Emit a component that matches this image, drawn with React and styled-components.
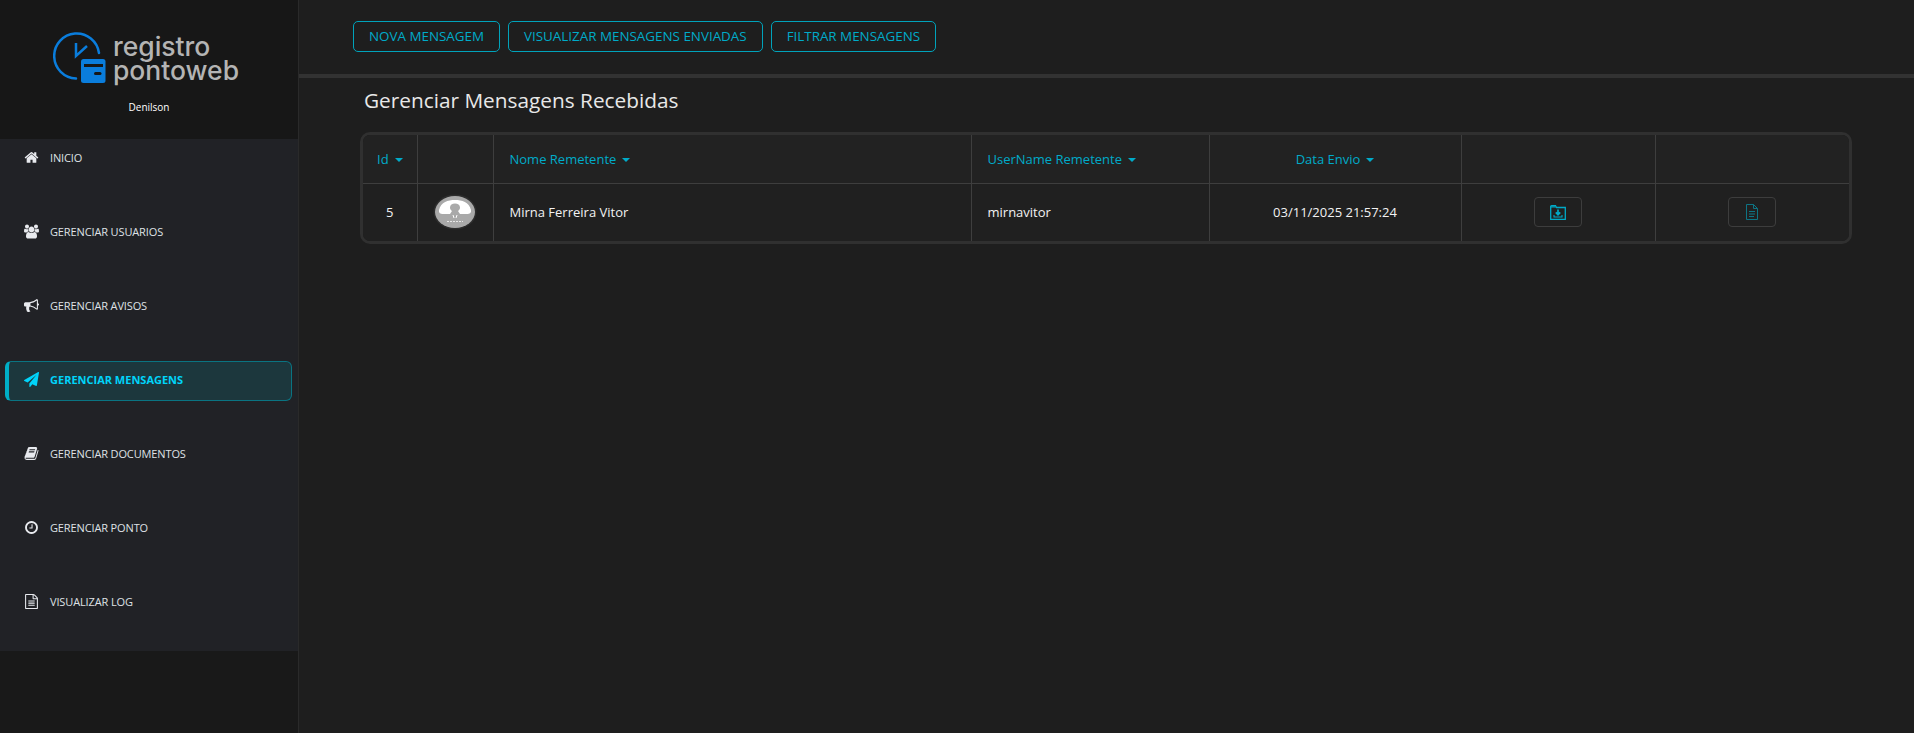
import React from "react";
import styled, { createGlobalStyle } from "styled-components";

const Global = createGlobalStyle`
  html, body { margin: 0; padding: 0; height: 100%; background: #1e1e1e; }
  * { box-sizing: border-box; }
  body { font-family: "Open Sans", "Noto Sans", sans-serif; overflow: hidden; }
`;

const Page = styled.div`
  display: flex;
  width: 1914px;
  height: 733px;
  overflow: hidden;
`;
const Sidebar = styled.aside`
  width: 299px;
  flex: none;
  background: #191919;
  border-right: 1px solid #2a2a2a;
`;
const Brand = styled.div`
  height: 139px;
  background: #171717;
  display: flex;
  flex-direction: column;
  align-items: center;
  padding-top: 32px;
`;
const Logo = styled.div`
  display: flex;
  align-items: center;
  gap: 7px;
  margin-left: -6px;
`;
const LogoText = styled.div`
  padding-top: 2px;
  font-family: "Inter", "Lato", sans-serif;
  font-size: 26.5px;
  line-height: 23.5px;
  font-weight: 500;
  color: #b4b4b4;
`;
const UserName = styled.div`
  margin-top: 17px;
  font-size: 10px;
  line-height: 14px;
  font-weight: 400;
  color: #fff;
`;
const Nav = styled.nav`
  background: #212226;
  height: 512px;
  display: flex;
  flex-direction: column;
  gap: 34px;
`;
const NavItem = styled.a`
  display: flex;
  align-items: center;
  height: 40px;
  margin: 0 6px 0 5px;
  padding: 0 0 3px ${p => (p.$active ? "15px" : "18px")};
  border-radius: 6px;
  font-size: 11px;
  letter-spacing: ${p => (p.$active ? "0" : "-0.13px")};
  font-weight: ${p => (p.$active ? 700 : 400)};
  color: ${p => (p.$active ? "#00d4fa" : "#dfe1e5")};
  background: ${p => (p.$active ? "#1c373d" : "transparent")};
  border: 1px solid ${p => (p.$active ? "#0a7482" : "transparent")};
  border-left: ${p => (p.$active ? "4px solid #00aec6" : "1px solid transparent")};
`;
const NavSvg = styled.svg`
  width: 15px;
  height: 15px;
  margin-right: 11px;
  flex: none;
  overflow: visible;
  fill: ${p => (p.$active ? "#00d4fa" : "#e8eaee")};
`;
const Main = styled.main`
  flex: 1;
  min-width: 0;
  background: #1e1e1e;
`;
const TopBar = styled.div`
  height: 78px;
  padding: 21px 0 0 54px;
  display: flex;
  gap: 8px;
  align-items: flex-start;
  border-bottom: 4px solid #323232;
`;
const TopButton = styled.button`
  height: 31px;
  padding: 0 15px;
  border: 1px solid #00a3bb;
  border-radius: 5px;
  background: transparent;
  color: #00abc9;
  font-family: inherit;
  font-size: 13.4px;
  line-height: 1;
  white-space: nowrap;
`;
const Title = styled.h1`
  margin: 7px 0 0 65px;
  font-size: 20.8px;
  line-height: 30px;
  font-weight: 400;
  color: #e8e8e8;
`;
const TableBox = styled.div`
  margin: 17px 0 0 61px;
  width: 1492px;
  border: 3px solid #303030;
  border-radius: 10px;
  overflow: hidden;
`;
const Table = styled.table`
  width: 100%;
  table-layout: fixed;
  border-collapse: collapse;
  background: #202020;
  font-size: 13px;
`;
const Th = styled.th`
  height: 48px;
  padding: 0 0 0 ${p => (p.$center ? "0" : "16px")};
  border: 1px solid #3e3e3e;
  border-top: 0;
  font-weight: 400;
  color: #00abc9;
  background: #222;
  text-align: ${p => (p.$center ? "center" : "left")};
  &:first-child { border-left: 0; padding-left: 14px; }
  &:last-child { border-right: 0; }
`;
const Td = styled.td`
  height: 58px;
  padding: 0 0 0 ${p => (p.$center ? "0" : "16px")};
  border: 1px solid #3e3e3e;
  border-bottom: 0;
  color: #f2f2f2;
  text-align: ${p => (p.$center ? "center" : "left")};
  &:first-child { border-left: 0; }
  &:last-child { border-right: 0; }
`;
const Caret = styled.span`
  display: inline-block;
  margin-left: 6px;
  vertical-align: 2px;
  border-left: 4px solid transparent;
  border-right: 4px solid transparent;
  border-top: 4px solid #00abc9;
`;
const IconButton = styled.button`
  display: inline-flex;
  align-items: center;
  justify-content: center;
  width: 48px;
  height: 30px;
  padding: 0;
  background: transparent;
  border: 1px solid #3d3d3d;
  border-radius: 4px;
  vertical-align: middle;
`;
const AvatarWrap = styled.span`
  display: inline-block;
  line-height: 0;
  vertical-align: middle;
`;

const LogoMark = () => (
  <svg width="53" height="51" viewBox="0 0 53 51" fill="none">
    <path d="M46 21A22.500 22.500 0 1 0 23 46.500" stroke="#0a7ddc" strokeWidth="2.500" strokeLinecap="round" />
    <path d="M23 11V24L34 14" stroke="#0a7ddc" strokeWidth="2.500" />
    <rect x="28" y="27" width="24.500" height="24" rx="2.500" fill="#0a7ddc" />
    <rect x="31" y="32" width="19" height="3" fill="#171717" />
    <rect x="41" y="40" width="7.500" height="3" rx="1.500" fill="#171717" />
  </svg>
);

const Avatar = () => (
  <svg width="44" height="36" viewBox="0 0 44 36">
    <ellipse cx="22" cy="18" rx="21.500" ry="17.500" fill="#2d2d2d" />
    <ellipse cx="22" cy="18" rx="20" ry="16" fill="#a9a9a9" />
    <path d="M6 16C8 8 15 6 22 6s14 2 16 10c.5 3-1.500 4-4 4h-7l-2-3c1.500-1 2-2.200 2-3.500 0-2.500-2.200-4-5-4s-5 1.500-5 4c0 1.300.5 2.500 2 3.500l-2 3H10c-2.500 0-4.500-1-4-4z" fill="#fff" />
    <path d="M14 27.500h16" stroke="#e8e8e8" strokeWidth="1" strokeDasharray="2 1" />
    <path d="M20 21l1 3M24 21l-1 3" stroke="#fff" strokeWidth="1" />
  </svg>
);

const FolderDown = () => (
  <svg width="16" height="15" viewBox="0 0 16 15" fill="none">
    <path d="M0.700 3V14.300H15.300V2.500H6.500L5.500 0.700H1.500Q0.700 0.700 0.700 1.500Z" stroke="#00abc9" strokeWidth="1.300" />
    <path d="M1 1.200H5.200L6 2.500H1Z" fill="#00abc9" />
    <path d="M8 4.500V9M5.800 7.400L8 9.700L10.200 7.400" stroke="#00abc9" strokeWidth="1.700" />
    <path d="M4 10V12H12V10" stroke="#00abc9" strokeWidth="1.100" />
  </svg>
);

const DocIcon = () => (
  <svg width="12" height="16" viewBox="0 0 12 16" fill="none" stroke="#0e7484">
    <path d="M.5.500H7.500L11.500 4.500V15.500H.5Z" />
    <path d="M7.500.500V4.500H11.500" />
    <path d="M3 7.500H9M3 10H9M3 12.500H8" />
  </svg>
);

const paths = {
  home: "M1472 992v480q0 26-19 45t-45 19h-384v-384h-256v384h-384q-26 0-45-19t-19-45v-480q0-1 .5-3t.5-3l575-474 575 474q1 2 1 6zm223-69l-62 74q-8 9-21 11h-3q-13 0-21-7l-692-577-692 577q-12 8-24 7-13-2-21-11l-62-74q-8-10-7-23.500t11-21.500l719-599q32-26 76-26t76 26l244 204v-195q0-14 9-23t23-9h192q14 0 23 9t9 23v408l219 182q10 8 11 21.500t-7 23.500z",
  users: "M593 896q-162 5-265 128h-134q-82 0-138-40.500t-56-118.500q0-353 124-353 6 0 43.500 21t97.500 42.500 119 21.500q67 0 133-23-5 37-5 66 0 139 81 256zm1071 637q0 120-73 189.500t-194 69.500h-874q-121 0-194-69.500t-73-189.500q0-53 3.500-103.500t14-109 26.500-108.500 43-97.500 62-81 85.500-53.500 111.500-20q10 0 43 21.500t73 48 107 48 135 21.500 135-21.500 107-48 73-48 43-21.500q61 0 111.500 20t85.500 53.500 62 81 43 97.500 26.500 108.500 14 109 3.500 103.500zm-1024-1277q0 106-75 181t-181 75-181-75-75-181 75-181 181-75 181 75 75 181zm704 384q0 159-112.500 271.500t-271.500 112.500-271.500-112.500-112.500-271.500 112.500-271.500 271.500-112.500 271.500 112.500 112.500 271.500zm576 225q0 78-56 118.500t-138 40.500h-134q-103-123-265-128 81-117 81-256 0-29-5-66 66 23 133 23 59 0 119-21.500t97.500-42.500 43.500-21q124 0 124 353zm-128-609q0 106-75 181t-181 75-181-75-75-181 75-181 181-75 181 75 75 181z",
  bullhorn: "M1664 640q53 0 90.500 37.500t37.500 90.500-37.500 90.500-90.500 37.500v384q0 52-38 90t-90 38q-417-347-812-380-58 19-91 66t-31 100.500 40 92.500q-20 33-23 65.500t6 58 33.500 55 48 50 61.500 50.500q-29 58-111.500 83t-168.500 11.500-132-55.500q-7-23-29.500-87.500t-32-94.500-23-89-15-101 3.500-98.500 22-110.500h-122q-66 0-113-47t-47-113v-192q0-66 47-113t113-47h480q435 0 896-384 52 0 90 38t38 90v384zm-128 604v-954q-394 302-768 343v270q377 42 768 341z",
  plane: "M1764 11q33 24 27 64l-256 1536q-5 29-32 45-14 8-31 8-11 0-24-5l-453-185-242 295q-18 23-49 23-13 0-22-4-19-7-30.500-23.500t-11.500-36.500v-349l864-1059-1069 925-395-162q-37-14-40-55-2-40 32-59l1664-960q15-9 32-9 20 0 36 11z",
  book: "M1703 478q40 57 18 129l-275 906q-19 64-76.500 107.500t-122.500 43.500h-923q-77 0-148.500-53.500t-99.500-131.500q-24-67-2-127 0-4 3-27t4-37q1-8-3-21.500t-3-19.500q2-11 8-21t16.500-23.500 16.500-23.500q23-38 45-91.500t30-91.500q3-10 .5-30t-.5-28q3-11 17-28t17-23q21-36 42-92t25-90q1-9-2.500-32t.5-28q4-13 22-30.500t22-22.500q19-26 42.500-84.500t27.500-96.500q1-8-3-25.500t-2-26.500q2-8 9-18t18-23 17-21q8-12 16.500-30.500t15-35 16-36 19.500-32 26.500-23.500 36-11.500 47.500 5.500l-1 3q38-9 51-9h761q74 0 114 56t18 130l-274 906q-36 119-71.500 153.500t-128.500 34.500h-869q-27 0-38 15-11 16-1 43 24 70 144 70h923q29 0 56-15.500t35-41.500l300-987q7-22 5-57 38 15 59 43zm-1064 2q-4 13 2 22.500t20 9.500h608q13 0 25.500-9.500t16.500-22.500l21-64q4-13-2-22.500t-20-9.500h-608q-13 0-25.500 9.500t-16.500 22.500zm-83 256q-4 13 2 22.500t20 9.500h608q13 0 25.500-9.500t16.500-22.500l21-64q4-13-2-22.500t-20-9.500h-608q-13 0-25.500 9.500t-16.500 22.500z",
  clock: "M1024 544v448q0 14-9 23t-23 9h-320q-14 0-23-9t-9-23v-64q0-14 9-23t23-9h224v-352q0-14 9-23t23-9h64q14 0 23 9t9 23zm416 352q0-148-73-273t-198-198-273-73-273 73-198 198-73 273 73 273 198 198 273 73 273-73 198-198 73-273zm224 0q0 209-103 385.500t-279.500 279.500-385.500 103-385.500-103-279.500-279.500-103-385.500 103-385.500 279.500-279.500 385.500-103 385.500 103 279.500 279.500 103 385.500z",
  file: "M1596 380q28 28 48 76t20 88v1152q0 40-28 68t-68 28h-1344q-40 0-68-28t-28-68v-1600q0-40 28-68t68-28h896q40 0 88 20t76 48zm-444-244v376h376q-10-29-22-41l-313-313q-12-12-41-22zm384 1528v-1024h-416q-40 0-68-28t-28-68v-416h-768v1536h1280zm-1024-864q0-14 9-23t23-9h704q14 0 23 9t9 23v64q0 14-9 23t-23 9h-704q-14 0-23-9t-9-23v-64zm736 224q14 0 23 9t9 23v64q0 14-9 23t-23 9h-704q-14 0-23-9t-9-23v-64q0-14 9-23t23-9h704zm0 256q14 0 23 9t9 23v64q0 14-9 23t-23 9h-704q-14 0-23-9t-9-23v-64q0-14 9-23t23-9h704z",
};

const items = [
  { label: "INICIO", icon: "home", box: "0 0 1792 1792" },
  { label: "GERENCIAR USUARIOS", icon: "users", box: "0 0 1920 1792" },
  { label: "GERENCIAR AVISOS", icon: "bullhorn", box: "0 0 1792 1792" },
  { label: "GERENCIAR MENSAGENS", icon: "plane", box: "0 0 1792 1792", active: true },
  { label: "GERENCIAR DOCUMENTOS", icon: "book", box: "0 0 1792 1792" },
  { label: "GERENCIAR PONTO", icon: "clock", box: "0 0 1792 1792" },
  { label: "VISUALIZAR LOG", icon: "file", box: "0 0 1792 1792" },
];

export default function App() {
  return (
    <Page>
      <Global />
      <Sidebar>
        <Brand>
          <Logo>
            <LogoMark />
            <LogoText>registro<br />pontoweb</LogoText>
          </Logo>
          <UserName>Denilson</UserName>
        </Brand>
        <Nav>
          {items.map(({ label, icon, box, active }) => (
            <NavItem key={label} $active={active}>
              <NavSvg viewBox={box} $active={active}><path d={paths[icon]} /></NavSvg>
              {label}
            </NavItem>
          ))}
        </Nav>
      </Sidebar>
      <Main>
        <TopBar>
          <TopButton>NOVA MENSAGEM</TopButton>
          <TopButton>VISUALIZAR MENSAGENS ENVIADAS</TopButton>
          <TopButton>FILTRAR MENSAGENS</TopButton>
        </TopBar>
        <Title>Gerenciar Mensagens Recebidas</Title>
        <TableBox>
          <Table>
            <colgroup>
              <col width="54" />
              <col width="76" />
              <col width="478" />
              <col width="238" />
              <col width="252" />
              <col width="194" />
              <col width="194" />
            </colgroup>
            <thead>
              <tr>
                <Th>Id<Caret /></Th>
                <Th />
                <Th>Nome Remetente<Caret /></Th>
                <Th>UserName Remetente<Caret /></Th>
                <Th $center>Data Envio<Caret /></Th>
                <Th />
                <Th />
              </tr>
            </thead>
            <tbody>
              <tr>
                <Td $center>5</Td>
                <Td $center><AvatarWrap><Avatar /></AvatarWrap></Td>
                <Td>Mirna Ferreira Vitor</Td>
                <Td>mirnavitor</Td>
                <Td $center>03/11/2025 21:57:24</Td>
                <Td $center><IconButton><FolderDown /></IconButton></Td>
                <Td $center><IconButton><DocIcon /></IconButton></Td>
              </tr>
            </tbody>
          </Table>
        </TableBox>
      </Main>
    </Page>
  );
}
